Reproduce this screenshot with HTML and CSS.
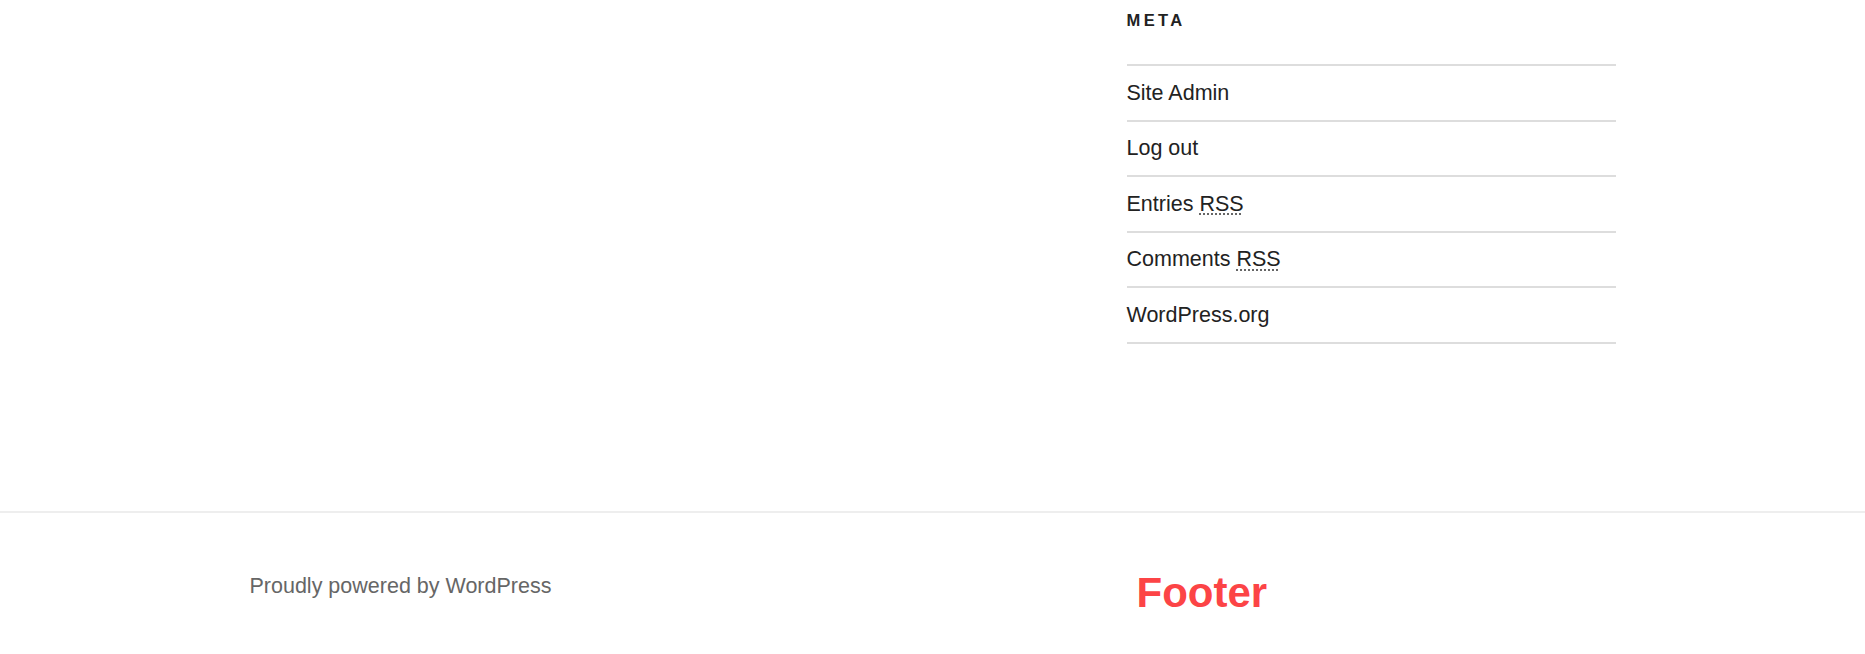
FILE: index.html
```html
<!DOCTYPE html>
<html lang="en">
<head>
<title>Meta widget and footer</title>
<meta charset="utf-8">
<meta name="viewport" content="width=device-width, initial-scale=1">
<link rel="stylesheet" href="styles.css">
</head>
<body>

<div class="site_content">
  <div class="wrap">
    <div class="primary"><!-- posts --></div>
    <aside class="widget_area">
      <section class="widget widget_meta">
        <h2 class="widget_title">Meta</h2>
        <ul class="meta_list">
          <li><a href="#">Site Admin</a></li>
          <li><a href="#">Log out</a></li>
          <li><a href="#">Entries <abbr title="Really Simple Syndication">RSS</abbr></a></li>
          <li><a href="#">Comments <abbr title="Really Simple Syndication">RSS</abbr></a></li>
          <li><a href="#">WordPress.org</a></li>
        </ul>
      </section>
    </aside>
  </div>
</div>

<footer class="site_footer">
  <div class="wrap">
    <div class="site_info">
      <a href="#">Proudly powered by WordPress</a>
    </div>
    <div class="footer_label">Footer</div>
  </div>
</footer>

</body>
</html>
```

FILE: styles.css
```css
html, body {
  margin: 0;
  padding: 0;
  background: #fff;
}
body {
  font-family: "Liberation Sans", Arial, sans-serif;
  font-size: 21.5px;
  line-height: 1.5;
  color: #222;
  overflow: hidden;
}
a {
  color: inherit;
  text-decoration: none;
}
h1, h2, h3, h4 {
  margin: 0;
}
.wrap {
  max-width: 1366px;
  margin: 0 auto;
  display: grid;
  grid-template-columns: 1fr 489px;
}
.site_content {
  padding-top: 8px;
  padding-bottom: 167px;
}
.widget_title {
  font-size: 16.5px;
  font-weight: 800;
  line-height: 24px;
  letter-spacing: 3.4px;
  text-transform: uppercase;
  color: #222;
  margin-bottom: 32px;
}
.meta_list {
  list-style: none;
  margin: 0;
  padding: 0;
  border-top: 2px solid #ddd;
}
.meta_list li {
  border-bottom: 2px solid #ddd;
  padding: 10.75px 0;
  line-height: 32px;
}
abbr[title] {
  text-decoration: underline dotted #666;
  text-decoration-thickness: 2px;
  text-underline-offset: 3px;
}
.site_footer {
  border-top: 2px solid #eee;
  padding-top: 57px;
  padding-bottom: 23px;
}
.site_info {
  line-height: 32px;
}
.site_info a {
  color: #666;
}
.footer_label {
  padding-left: 10px;
  font-size: 42px;
  font-weight: bold;
  line-height: normal;
  margin-top: -1px;
  color: #fc4446;
}
```
